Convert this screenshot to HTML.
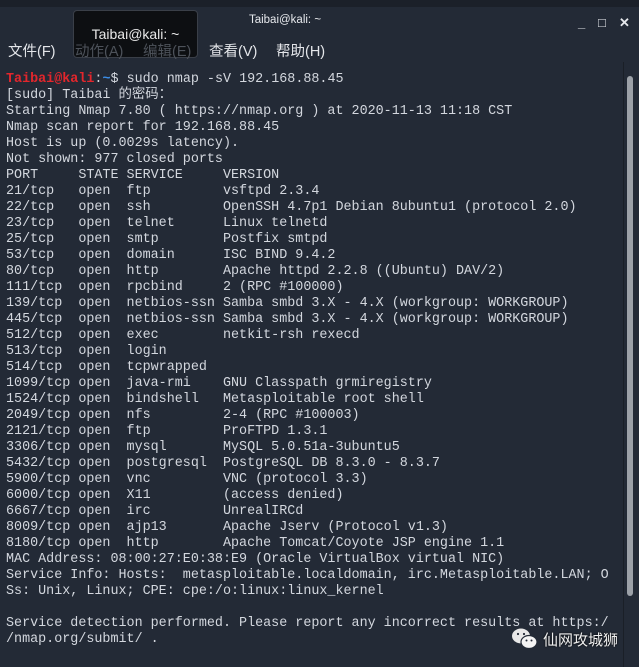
<!DOCTYPE html>
<html><head><meta charset="utf-8"><style>
body{margin:0;width:639px;height:667px;background:#232a36;overflow:hidden;position:relative;font-family:"Liberation Sans","Noto Sans CJK SC",sans-serif}
.top{position:absolute;left:0;top:0;width:639px;height:7px;background:#1b2029}
.title{position:absolute;top:14px;left:235px;width:100px;text-align:center;color:#e6e8ec;font-size:11.5px}
.ctl{position:absolute;top:15px;color:#e6e8ec;font-size:13px;font-weight:bold}
.menu{position:absolute;top:40px;font-size:14.5px;color:#e4e6ea;z-index:2}
.tip{position:absolute;left:73px;top:10px;width:123px;height:46px;background:#0d0f12;border:1px solid #3a3f48;border-radius:4px;z-index:1}
.tiptext{position:absolute;left:73px;top:26px;width:125px;text-align:center;color:#e8e8e8;font-size:14px;z-index:1}
pre{position:absolute;left:6px;top:72px;margin:0;font-family:"Liberation Mono","Noto Sans CJK SC",monospace;font-size:13.4px;line-height:16px;color:#d3d7de}
.r{color:#e3262c;font-weight:bold}.b{color:#3b8ee8;font-weight:bold}
.sb{position:absolute;left:627px;top:76px;width:6px;height:520px;background:#9ca1a8;border-radius:3px}
.div{position:absolute;left:623px;top:62px;width:1px;height:605px;background:#1a1f27}
.wm{position:absolute;top:629px;color:#f0f0f0;font-size:15px;text-shadow:0 0 2px #000}
</style></head><body>
<div class="top"></div>
<div class="title">Taibai@kali: ~</div>
<div class="ctl" style="left:578px">_</div><div class="ctl" style="left:598px">□</div><div class="ctl" style="left:619px">✕</div>
<div class="menu" style="left:8px">文件(F)</div>
<div class="menu" style="left:75px;color:#4d525a">动作(A)</div>
<div class="menu" style="left:143px;color:#4d525a">编辑(E)</div>
<div class="menu" style="left:209px">查看(V)</div>
<div class="menu" style="left:276px">帮助(H)</div>
<div class="tip"></div><div class="tiptext">Taibai@kali: ~</div>
<div class="div"></div><div class="sb"></div>
<pre><span class="r">Taibai@kali</span>:<span class="b">~</span>$ sudo nmap -sV 192.168.88.45
[sudo] Taibai 的密码：
Starting Nmap 7.80 ( https://nmap.org ) at 2020-11-13 11:18 CST
Nmap scan report for 192.168.88.45
Host is up (0.0029s latency).
Not shown: 977 closed ports
PORT     STATE SERVICE     VERSION
21/tcp   open  ftp         vsftpd 2.3.4
22/tcp   open  ssh         OpenSSH 4.7p1 Debian 8ubuntu1 (protocol 2.0)
23/tcp   open  telnet      Linux telnetd
25/tcp   open  smtp        Postfix smtpd
53/tcp   open  domain      ISC BIND 9.4.2
80/tcp   open  http        Apache httpd 2.2.8 ((Ubuntu) DAV/2)
111/tcp  open  rpcbind     2 (RPC #100000)
139/tcp  open  netbios-ssn Samba smbd 3.X - 4.X (workgroup: WORKGROUP)
445/tcp  open  netbios-ssn Samba smbd 3.X - 4.X (workgroup: WORKGROUP)
512/tcp  open  exec        netkit-rsh rexecd
513/tcp  open  login
514/tcp  open  tcpwrapped
1099/tcp open  java-rmi    GNU Classpath grmiregistry
1524/tcp open  bindshell   Metasploitable root shell
2049/tcp open  nfs         2-4 (RPC #100003)
2121/tcp open  ftp         ProFTPD 1.3.1
3306/tcp open  mysql       MySQL 5.0.51a-3ubuntu5
5432/tcp open  postgresql  PostgreSQL DB 8.3.0 - 8.3.7
5900/tcp open  vnc         VNC (protocol 3.3)
6000/tcp open  X11         (access denied)
6667/tcp open  irc         UnrealIRCd
8009/tcp open  ajp13       Apache Jserv (Protocol v1.3)
8180/tcp open  http        Apache Tomcat/Coyote JSP engine 1.1
MAC Address: 08:00:27:E0:38:E9 (Oracle VirtualBox virtual NIC)
Service Info: Hosts:  metasploitable.localdomain, irc.Metasploitable.LAN; O
Ss: Unix, Linux; CPE: cpe:/o:linux:linux_kernel

Service detection performed. Please report any incorrect results at https:/
/nmap.org/submit/ .</pre>
<svg style="position:absolute;left:511px;top:627px" width="28" height="24" viewBox="0 0 28 24"><ellipse cx="10" cy="9" rx="9" ry="7.5" fill="#e8e8e8"/><ellipse cx="18" cy="15" rx="8" ry="6.5" fill="#f4f4f4" stroke="#232a36" stroke-width="1.2"/><circle cx="7" cy="7" r="1.1" fill="#232a36"/><circle cx="13" cy="7" r="1.1" fill="#232a36"/><circle cx="15.5" cy="13.5" r="1" fill="#232a36"/><circle cx="20.5" cy="13.5" r="1" fill="#232a36"/></svg>
<div class="wm" style="left:543px">仙网攻城狮</div>
</body></html>
